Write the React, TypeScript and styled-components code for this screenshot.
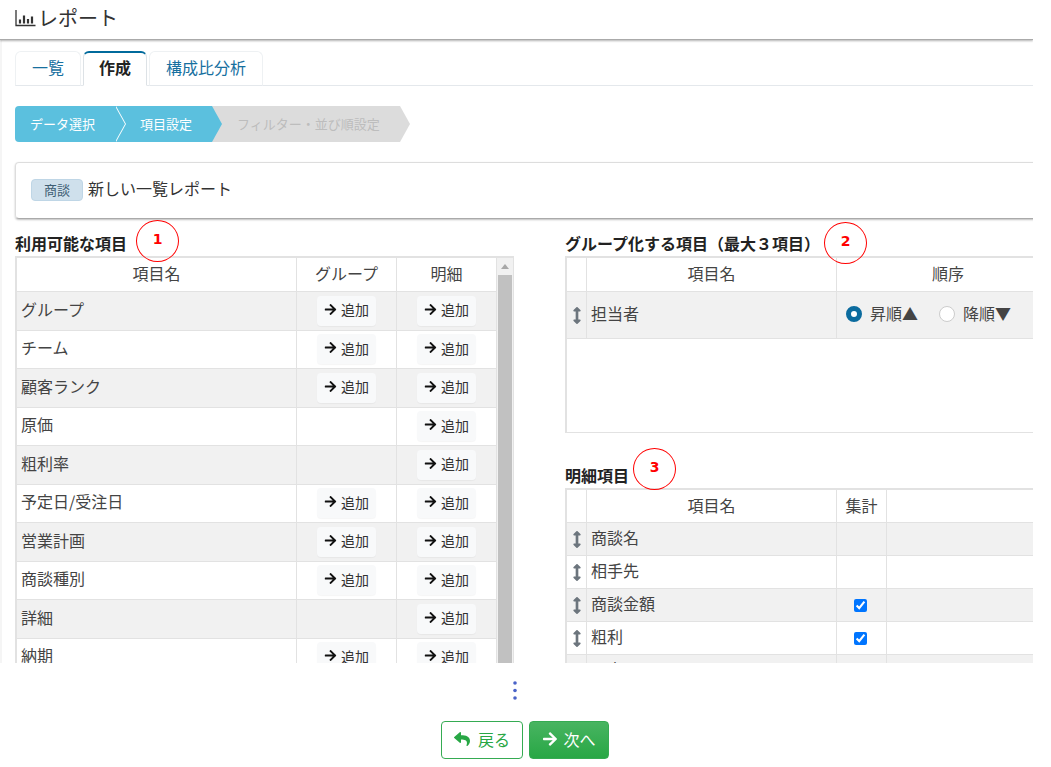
import { FC } from 'react'
import { FaArrowRight, FaArrowsAltV, FaReply } from 'react-icons/fa'
import styled, { createGlobalStyle } from 'styled-components'

const FONT = '"Noto Sans CJK JP", "Liberation Sans", sans-serif'
const LINE = '#e2e2e2'
const BLUE = '#5bc0de'

const GlobalStyle = createGlobalStyle`
  html, body {
    margin: 0;
    background: #fff;
    overflow: hidden;
  }
  body {
    font-family: ${FONT};
    color: #333;
    font-size: 16px;
  }
`

const Page = styled.div`
  width: 1033px;
  height: 767px;
  overflow: hidden;
  display: flex;
  flex-direction: column;
`

const Header = styled.header`
  flex: none;
  position: relative;
  z-index: 2;
  height: 40px;
  box-sizing: border-box;
  padding: 0 0 3px 15px;
  display: flex;
  align-items: center;
  gap: 2px;
  font-size: 20px;
  line-height: 36px;
  color: #333;
  background: #fff;
  border-bottom: 1px solid #aaa;
  box-shadow: 0 1px 2px rgba(0, 0, 0, 0.3);
`

const Scroll = styled.main`
  flex: none;
  height: 623px;
  overflow: hidden;
  box-sizing: border-box;
  border-left: 2px solid #f5f5f5;
  padding-left: 13px;
`

const Inner = styled.div`
  width: 1060px;
`

const TabBar = styled.nav`
  display: flex;
  gap: 2px;
  height: 35px;
  margin-top: 11px;
  box-sizing: border-box;
  border-bottom: 1px solid #e4e8ec;
`

const Tab = styled.a<{ $active?: boolean }>`
  box-sizing: border-box;
  height: 35px;
  padding: 0 ${({ $active }) => ($active ? '15px' : '16px')} 4px;
  display: flex;
  align-items: center;
  font-size: 16px;
  line-height: 26px;
  font-weight: ${({ $active }) => ($active ? 700 : 400)};
  color: ${({ $active }) => ($active ? '#222' : '#17709f')};
  background: #fff;
  border: 1px solid ${({ $active }) => ($active ? '#dde2e6' : '#eef1f3')};
  border-top: ${({ $active }) => ($active ? '2px solid #006a9c' : '1px solid #eef1f3')};
  border-bottom: ${({ $active }) => ($active ? '1px solid #fff' : '1px solid #e4e8ec')};
  border-radius: 6px 6px 0 0;
`

const Steps = styled.div`
  display: flex;
  height: 36px;
  margin-top: 20px;
`

const Step = styled.div<{ $off?: boolean; $first?: boolean; $z: number; $w: number }>`
  position: relative;
  z-index: ${({ $z }) => $z};
  box-sizing: border-box;
  width: ${({ $w }) => $w}px;
  padding-left: ${({ $first }) => ($first ? '15px' : '25px')};
  font-size: 13px;
  line-height: 36px;
  white-space: nowrap;
  color: ${({ $off }) => ($off ? '#bdbdbd' : '#fff')};
  background: ${({ $off }) => ($off ? '#dcdcdc' : BLUE)};
  border-radius: ${({ $first }) => ($first ? '4px 0 0 4px' : '0')};

  &::before {
    content: ${({ $first }) => ($first ? "''" : 'none')};
    position: absolute;
    top: 0;
    left: calc(100% + 1px);
    border-left: 10px solid #fff;
    border-top: 18px solid transparent;
    border-bottom: 18px solid transparent;
  }

  &::after {
    content: '';
    position: absolute;
    top: 0;
    left: 100%;
    border-left: 10px solid ${({ $off }) => ($off ? '#dcdcdc' : BLUE)};
    border-top: 18px solid transparent;
    border-bottom: 18px solid transparent;
  }
`

const NameCard = styled.section`
  box-sizing: border-box;
  height: 57px;
  margin-top: 20px;
  padding: 0 0 2px 15px;
  display: flex;
  align-items: center;
  gap: 5px;
  border: 1px solid #ddd;
  border-bottom-color: #aaa;
  border-radius: 4px;
  box-shadow: 0 1px 2px rgba(0, 0, 0, 0.25);
`

const Badge = styled.span`
  width: 52px;
  height: 22px;
  box-sizing: border-box;
  text-align: center;
  font-size: 13px;
  line-height: 20px;
  color: #3f5f75;
  background: #cfe0ec;
  border: 1px solid #bfd6e6;
  border-radius: 4px;
`

const CardTitle = styled.span`
  font-size: 16px;
  line-height: 22px;
  color: #333;
  position: relative;
  top: -2px;
`

const Columns = styled.div`
  display: flex;
  gap: 51px;
  margin-top: 12px;
`

const LeftColumn = styled.div`
  flex: none;
  width: 499px;
`

const RightColumn = styled.div`
  flex: none;
  width: 496px;
`

const Heading = styled.h2<{ $gap?: number }>`
  position: relative;
  margin: ${({ $gap }) => $gap ?? 0}px 0 0;
  height: 25px;
  font-size: 16px;
  line-height: 24px;
  font-weight: 700;
  color: #222;
  white-space: nowrap;
`

const Marker = styled.span<{ $left: number; $top: number }>`
  position: absolute;
  left: ${({ $left }) => $left}px;
  top: ${({ $top }) => $top}px;
  box-sizing: border-box;
  width: 43px;
  height: 42px;
  padding-bottom: 5px;
  display: flex;
  align-items: center;
  justify-content: center;
  border: 1.5px solid #f00;
  border-radius: 50%;
  background: transparent;
  font-family: 'DejaVu Sans', sans-serif;
  font-size: 14px;
  font-weight: 700;
  color: #f00;
`

const Box = styled.div<{ $height: number }>`
  display: flex;
  box-sizing: border-box;
  height: ${({ $height }) => $height}px;
  border: 1px solid ${LINE};
  border-top-width: 2px;
  border-left-width: 2px;
  overflow: hidden;
`

const Grid = styled.div`
  flex: 1;
  min-width: 0;
`

const Row = styled.div<{ $cols: string; $height: number; $shade?: boolean }>`
  display: grid;
  grid-template-columns: ${({ $cols }) => $cols};
  box-sizing: border-box;
  height: ${({ $height }) => $height}px;
  background: ${({ $shade }) => ($shade ? '#f1f1f1' : '#fff')};
  border-bottom: 1px solid ${LINE};
`

const Cell = styled.div<{ $center?: boolean }>`
  display: flex;
  align-items: center;
  justify-content: ${({ $center }) => ($center ? 'center' : 'flex-start')};
  box-sizing: border-box;
  min-width: 0;
  padding-left: ${({ $center }) => ($center ? 0 : '4px')};
  padding-bottom: ${({ $center }) => ($center ? 0 : '4px')};
  font-size: 16px;
  line-height: 22px;
  color: #444;
  white-space: nowrap;
  border-right: 1px solid ${LINE};
`

const HeadCell = styled(Cell).attrs({ $center: true })`
  padding-bottom: 3px;
`

const AddButton = styled.button`
  width: 59px;
  height: 30px;
  padding: 0 0 3px;
  display: flex;
  align-items: center;
  justify-content: center;
  gap: 4px;
  font-family: ${FONT};
  font-size: 14px;
  line-height: 20px;
  color: #333;
  background: #f8f9fa;
  border: none;
  border-radius: 4px;
  box-shadow: 0 1px 1px rgba(0, 0, 0, 0.04);

  svg {
    width: 13px;
    height: 13px;
    color: #111;
  }
`

const Track = styled.div`
  flex: none;
  width: 16px;
  box-sizing: border-box;
  padding: 0 1px 0 1px;
  display: flex;
  flex-direction: column;
  background: #f1f1f1;
`

const TrackArrow = styled.div`
  flex: none;
  height: 17px;
  display: flex;
  align-items: center;
  justify-content: center;

  &::before {
    content: '';
    border-left: 4px solid transparent;
    border-right: 4px solid transparent;
    border-bottom: 5px solid #a8a8a8;
  }
`

const Thumb = styled.div`
  flex: 1;
  background: #c1c1c1;
`

const Grip = styled(FaArrowsAltV)`
  width: 14px;
  height: 17px;
  color: #6c757d;
`

const SumCheck = styled.input`
  margin: 0 2px 0 0;
`

const RadioGroup = styled.div`
  display: flex;
  align-items: center;
  padding: 0 0 4px 9px;
  gap: 21px;
`

const RadioLabel = styled.label`
  display: flex;
  align-items: center;
  gap: 8px;
  font-size: 16px;
  line-height: 22px;
  color: #444;
`

const Radio = styled.input`
  appearance: none;
  margin: 2px 0 0;
  width: 16px;
  height: 16px;
  box-sizing: border-box;
  background: #fff;
  border: 1px solid #ccc;
  border-radius: 50%;

  &:checked {
    border: 5px solid #0b6b9e;
  }
`

const Footer = styled.footer`
  flex: none;
  height: 104px;
  background: #fff;
  display: flex;
  flex-direction: column;
  align-items: center;
`

const Dots = styled.svg`
  display: block;
  width: 4px;
  height: 20px;
  margin: 18px 3px 0 0;
  color: #4a63c8;
`

const Actions = styled.div`
  display: flex;
  gap: 6px;
  margin: 20px 0 0 17px;
`

const ActionButton = styled.button<{ $primary?: boolean }>`
  height: 38px;
  width: ${({ $primary }) => ($primary ? '80px' : '82px')};
  padding: 0 0 2px;
  display: flex;
  align-items: center;
  justify-content: center;
  gap: ${({ $primary }) => ($primary ? '5px' : '8px')};
  font-family: ${FONT};
  font-size: 16px;
  line-height: 24px;
  color: ${({ $primary }) => ($primary ? '#fff' : '#28a745')};
  background: ${({ $primary }) =>
    $primary ? 'linear-gradient(180deg, #48b461, #28a745)' : '#fff'};
  border: 1px solid #35ab52;
  border-radius: 4px;

  svg {
    width: 16px;
    height: 16px;
  }
`

const ReportIcon: FC = () => (
  <svg width="21" height="18" viewBox="0 0 21 18" fill="none" stroke="#333">
    <path d="M1 1v15.5h19.5" strokeWidth="1.3" />
    <path d="M5 10.5v4M9 6.5v8M13 10v4.5M17 7.5v7" strokeWidth="2.2" />
  </svg>
)

const LEFT_COLS = '280px 100px 100px'
const GROUP_COLS = '20px 250px 1fr'
const DETAIL_COLS = '20px 250px 50px 1fr'

const fields: { name: string; group: boolean }[] = [
  { name: 'グループ', group: true },
  { name: 'チーム', group: true },
  { name: '顧客ランク', group: true },
  { name: '原価', group: false },
  { name: '粗利率', group: false },
  { name: '予定日/受注日', group: true },
  { name: '営業計画', group: true },
  { name: '商談種別', group: true },
  { name: '詳細', group: false },
  { name: '納期', group: true },
]

const details: { name: string; sum?: boolean; checked?: boolean }[] = [
  { name: '商談名' },
  { name: '相手先' },
  { name: '商談金額', sum: true, checked: true },
  { name: '粗利', sum: true, checked: true },
  { name: '予定日' },
]

const Add: FC = () => (
  <AddButton type="button">
    <FaArrowRight />
    追加
  </AddButton>
)

const App: FC = () => {
  return (
    <Page>
      <GlobalStyle />
      <Header>
        <ReportIcon />
        レポート
      </Header>

      <Scroll>
        <Inner>
          <TabBar>
            <Tab>一覧</Tab>
            <Tab $active>作成</Tab>
            <Tab>構成比分析</Tab>
          </TabBar>

          <Steps>
            <Step $first $z={3} $w={100}>データ選択</Step>
            <Step $z={2} $w={97}>項目設定</Step>
            <Step $off $z={1} $w={188}>フィルター・並び順設定</Step>
          </Steps>

          <NameCard>
            <Badge>商談</Badge>
            <CardTitle>新しい一覧レポート</CardTitle>
          </NameCard>

          <Columns>
            <LeftColumn>
              <Heading>
                利用可能な項目
                <Marker $left={121} $top={-11}>1</Marker>
              </Heading>
              <Box $height={440}>
                <Grid>
                  <Row $cols={LEFT_COLS} $height={34}>
                    <HeadCell>項目名</HeadCell>
                    <HeadCell>グループ</HeadCell>
                    <HeadCell>明細</HeadCell>
                  </Row>
                  {fields.map((field, i) => (
                    <Row key={field.name} $cols={LEFT_COLS} $height={38.5} $shade={i % 2 === 0}>
                      <Cell>{field.name}</Cell>
                      <Cell $center>{field.group && <Add />}</Cell>
                      <Cell $center><Add /></Cell>
                    </Row>
                  ))}
                </Grid>
                <Track>
                  <TrackArrow />
                  <Thumb />
                </Track>
              </Box>
            </LeftColumn>

            <RightColumn>
              <Heading>
                グループ化する項目（最大３項目）
                <Marker $left={259} $top={-9}>2</Marker>
              </Heading>
              <Box $height={177}>
                <Grid>
                  <Row $cols={GROUP_COLS} $height={34}>
                    <HeadCell />
                    <HeadCell>項目名</HeadCell>
                    <HeadCell>順序</HeadCell>
                  </Row>
                  <Row $cols={GROUP_COLS} $height={47} $shade>
                    <Cell $center><Grip /></Cell>
                    <Cell>担当者</Cell>
                    <RadioGroup>
                      <RadioLabel>
                        <Radio type="radio" name="order" defaultChecked />
                        昇順▲
                      </RadioLabel>
                      <RadioLabel>
                        <Radio type="radio" name="order" />
                        降順▼
                      </RadioLabel>
                    </RadioGroup>
                  </Row>
                </Grid>
              </Box>

              <Heading $gap={30}>
                明細項目
                <Marker $left={68} $top={-15}>3</Marker>
              </Heading>
              <Box $height={200}>
                <Grid>
                  <Row $cols={DETAIL_COLS} $height={33}>
                    <HeadCell />
                    <HeadCell>項目名</HeadCell>
                    <HeadCell>集計</HeadCell>
                    <HeadCell />
                  </Row>
                  {details.map((item, i) => (
                    <Row key={item.name} $cols={DETAIL_COLS} $height={33} $shade={i % 2 === 0}>
                      <Cell $center><Grip /></Cell>
                      <Cell>{item.name}</Cell>
                      <Cell $center>
                        {item.sum && <SumCheck type="checkbox" defaultChecked={item.checked} />}
                      </Cell>
                      <Cell />
                    </Row>
                  ))}
                </Grid>
              </Box>
            </RightColumn>
          </Columns>
        </Inner>
      </Scroll>

      <Footer>
        <Dots viewBox="0 0 4 20">
          <circle cx="2" cy="2" r="1.8" fill="currentColor" />
          <circle cx="2" cy="9.5" r="1.8" fill="currentColor" />
          <circle cx="2" cy="17" r="1.8" fill="currentColor" />
        </Dots>
        <Actions>
          <ActionButton type="button">
            <FaReply />
            戻る
          </ActionButton>
          <ActionButton type="button" $primary>
            <FaArrowRight />
            次へ
          </ActionButton>
        </Actions>
      </Footer>
    </Page>
  )
}

export default App
